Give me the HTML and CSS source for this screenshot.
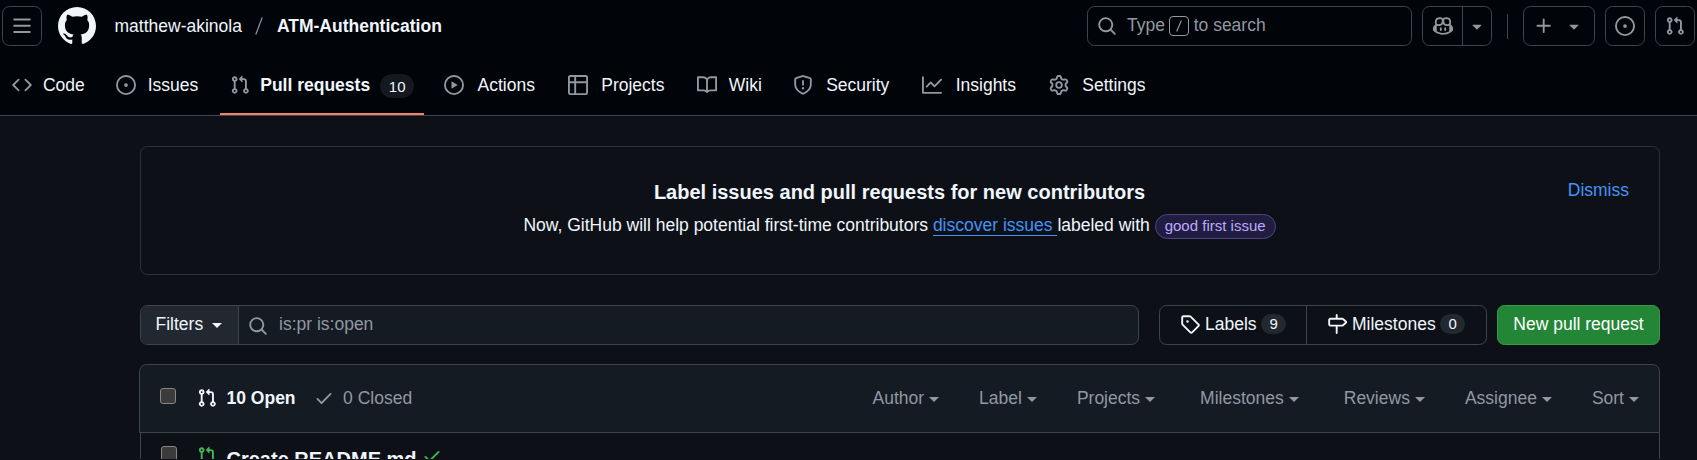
FILE: index.html
```html
<!DOCTYPE html>
<html lang="en">
<head>
<meta charset="utf-8">
<title>Pull requests · matthew-akinola/ATM-Authentication</title>
<link rel="stylesheet" href="styles.css">
</head>
<body>
<svg class="defs" aria-hidden="true">
  <symbol id="pr" viewBox="0 0 16 16"><path d="M1.5 3.25a2.25 2.25 0 1 1 3 2.122v5.256a2.251 2.251 0 1 1-1.5 0V5.372A2.25 2.25 0 0 1 1.5 3.25Zm5.677-.177L9.573.677A.25.25 0 0 1 10 .854V2.5h1A2.5 2.5 0 0 1 13.5 5v5.628a2.251 2.251 0 1 1-1.5 0V5a1 1 0 0 0-1-1h-1v1.646a.25.25 0 0 1-.427.177L7.177 3.427a.25.25 0 0 1 0-.354ZM3.75 2.5a.75.75 0 1 0 0 1.5.75.75 0 0 0 0-1.5Zm0 9.5a.75.75 0 1 0 0 1.5.75.75 0 0 0 0-1.5Zm8.25.75a.75.75 0 1 0 1.5 0 .75.75 0 0 0-1.5 0Z"/></symbol>
  <symbol id="issue" viewBox="0 0 16 16"><path d="M8 9.5a1.5 1.5 0 1 0 0-3 1.5 1.5 0 0 0 0 3Z"/><path d="M8 0a8 8 0 1 1 0 16A8 8 0 0 1 8 0ZM1.5 8a6.5 6.5 0 1 0 13 0 6.5 6.5 0 0 0-13 0Z"/></symbol>
  <symbol id="search" viewBox="0 0 16 16"><path d="M10.68 11.74a6 6 0 0 1-7.922-8.982 6 6 0 0 1 8.982 7.922l3.04 3.04a.749.749 0 0 1-.326 1.275.749.749 0 0 1-.734-.215ZM11.5 7a4.499 4.499 0 1 0-8.997 0A4.499 4.499 0 0 0 11.5 7Z"/></symbol>
  <symbol id="caret" viewBox="0 0 16 16"><path d="m4.427 7.427 3.396 3.396a.25.25 0 0 0 .354 0l3.396-3.396A.25.25 0 0 0 11.396 7H4.604a.25.25 0 0 0-.177.427Z"/></symbol>
  <symbol id="check" viewBox="0 0 16 16"><path d="M13.78 4.22a.75.75 0 0 1 0 1.06l-7.25 7.25a.75.75 0 0 1-1.06 0L2.22 9.28a.751.751 0 0 1 .018-1.042.751.751 0 0 1 1.042-.018L6 10.94l6.72-6.72a.75.75 0 0 1 1.06 0Z"/></symbol>
</svg>

<header class="top">
  <div class="bar">
    <button class="box menu"><svg class="icon" viewBox="0 0 16 16"><path d="M1 2.75A.75.75 0 0 1 1.75 2h12.5a.75.75 0 0 1 0 1.5H1.75A.75.75 0 0 1 1 2.75Zm0 5A.75.75 0 0 1 1.75 7h12.5a.75.75 0 0 1 0 1.5H1.75A.75.75 0 0 1 1 7.75ZM1.75 12h12.5a.75.75 0 0 1 0 1.5H1.75a.75.75 0 0 1 0-1.5Z"/></svg></button>
    <svg class="mark" viewBox="0 0 16 16"><path d="M8 0c4.42 0 8 3.58 8 8a8.013 8.013 0 0 1-5.45 7.59c-.4.08-.55-.17-.55-.38 0-.27.01-1.13.01-2.2 0-.75-.25-1.23-.54-1.48 1.78-.2 3.65-.88 3.65-3.95 0-.88-.31-1.59-.82-2.15.08-.2.36-1.02-.08-2.12 0 0-.67-.22-2.2.82-.64-.18-1.32-.27-2-.27-.68 0-1.36.09-2 .27-1.53-1.03-2.2-.82-2.2-.82-.44 1.1-.16 1.92-.08 2.12-.51.56-.82 1.28-.82 2.15 0 3.06 1.86 3.75 3.64 3.95-.23.2-.44.55-.51 1.07-.46.21-1.61.55-2.33-.66-.15-.24-.6-.83-1.23-.82-.67.01-.27.38.01.53.34.19.73.9.82 1.13.16.45.68 1.31 2.69.94 0 .67.01 1.3.01 1.49 0 .21-.15.45-.55.38A7.995 7.995 0 0 1 0 8c0-4.42 3.58-8 8-8Z"/></svg>
    <div class="crumbs"><a>matthew-akinola</a><svg class="slash" viewBox="0 0 8 18"><path d="M7.2.5.8 17.5"/></svg><a class="strong">ATM-Authentication</a></div>
    <div class="tools">
      <div class="box find"><svg class="icon"><use href="#search"/></svg><span class="find-text">Type <kbd><svg viewBox="0 0 20 20"><path d="M12.6 4 7.4 16"/></svg></kbd> to search</span></div>
      <div class="box copilot">
        <span class="half"><svg class="icon" viewBox="0 0 16 16"><path d="M7.998 15.035c-4.562 0-7.873-2.914-7.998-3.749V9.338c.085-.628.677-1.686 1.588-2.065.013-.07.024-.143.036-.218.029-.183.06-.384.126-.612-.201-.508-.254-1.084-.254-1.656 0-.87.128-1.769.693-2.484.579-.733 1.494-1.124 2.724-1.261 1.206-.134 2.262.034 2.944.765.05.053.096.108.139.165.044-.057.094-.112.143-.165.682-.731 1.738-.899 2.944-.765 1.23.137 2.145.528 2.724 1.261.566.715.693 1.614.693 2.484 0 .572-.053 1.148-.254 1.656.066.228.098.429.126.612.012.076.024.148.037.218.924.385 1.522 1.471 1.591 2.095v1.872c0 .766-3.351 3.795-8.002 3.795Zm0-1.485c2.28 0 4.584-1.11 5.002-1.433V7.862l-.023-.116c-.49.21-1.075.291-1.727.291-1.146 0-2.059-.327-2.71-.991A3.222 3.222 0 0 1 8 6.303a3.24 3.24 0 0 1-.544.743c-.65.664-1.563.991-2.71.991-.652 0-1.236-.081-1.727-.291l-.023.116v4.255c.419.323 2.722 1.433 5.002 1.433ZM6.762 2.83c-.193-.206-.637-.413-1.682-.297-1.019.113-1.479.404-1.713.7-.247.312-.369.789-.369 1.554 0 .793.129 1.171.308 1.371.162.181.519.379 1.442.379.853 0 1.339-.235 1.638-.54.315-.322.527-.827.617-1.553.117-.935-.037-1.395-.241-1.614Zm4.155-.297c-1.044-.116-1.488.091-1.681.297-.204.219-.359.679-.242 1.614.091.726.303 1.231.618 1.553.299.305.784.54 1.638.54.922 0 1.28-.198 1.442-.379.179-.2.308-.578.308-1.371 0-.765-.123-1.242-.37-1.554-.233-.296-.693-.587-1.713-.7Z"/><path d="M6.25 9.037a.75.75 0 0 1 .75.75v1.501a.75.75 0 0 1-1.5 0V9.787a.75.75 0 0 1 .75-.75Zm4.25.75v1.501a.75.75 0 0 1-1.5 0V9.787a.75.75 0 0 1 1.5 0Z"/></svg></span>
        <span class="half drop"><svg class="icon"><use href="#caret"/></svg></span>
      </div>
      <span class="sep"></span>
      <div class="box plus"><svg class="icon" viewBox="0 0 16 16"><path d="M7.75 2a.75.75 0 0 1 .75.75V7h4.25a.75.75 0 0 1 0 1.5H8.5v4.25a.75.75 0 0 1-1.5 0V8.5H2.75a.75.75 0 0 1 0-1.5H7V2.75A.75.75 0 0 1 7.75 2Z"/></svg><svg class="icon"><use href="#caret"/></svg></div>
      <button class="box tool"><svg class="icon"><use href="#issue"/></svg></button>
      <button class="box tool"><svg class="icon"><use href="#pr"/></svg></button>
    </div>
  </div>
  <nav class="tabs">
    <a class="tab"><svg class="icon" viewBox="0 0 16 16"><path d="m11.28 3.22 4.25 4.25a.75.75 0 0 1 0 1.06l-4.25 4.25a.749.749 0 0 1-1.275-.326.749.749 0 0 1 .215-.734L13.94 8l-3.72-3.72a.749.749 0 0 1 .326-1.275.749.749 0 0 1 .734.215Zm-6.56 0a.751.751 0 0 1 1.042.018.751.751 0 0 1 .018 1.042L2.06 8l3.72 3.72a.749.749 0 0 1-.326 1.275.749.749 0 0 1-.734-.215L.47 8.53a.75.75 0 0 1 0-1.06Z"/></svg><span class="name" data-content="Code">Code</span></a>
    <a class="tab"><svg class="icon"><use href="#issue"/></svg><span class="name" data-content="Issues">Issues</span></a>
    <a class="tab current"><svg class="icon"><use href="#pr"/></svg><span class="name" data-content="Pull requests">Pull requests</span><span class="count">10</span></a>
    <a class="tab"><svg class="icon" viewBox="0 0 16 16"><path d="M8 0a8 8 0 1 1 0 16A8 8 0 0 1 8 0ZM1.5 8a6.5 6.5 0 1 0 13 0 6.5 6.5 0 0 0-13 0Zm4.879-2.773 4.264 2.559a.25.25 0 0 1 0 .428l-4.264 2.559A.25.25 0 0 1 6 10.559V5.442a.25.25 0 0 1 .379-.215Z"/></svg><span class="name" data-content="Actions">Actions</span></a>
    <a class="tab"><svg class="icon" viewBox="0 0 16 16"><path d="M0 1.75C0 .784.784 0 1.75 0h12.5C15.216 0 16 .784 16 1.75v12.5A1.75 1.75 0 0 1 14.25 16H1.75A1.75 1.75 0 0 1 0 14.25ZM6.5 6.5v8h7.75a.25.25 0 0 0 .25-.25V6.5Zm8-1.5V1.75a.25.25 0 0 0-.25-.25H6.5V5Zm-13 1.5v7.75c0 .138.112.25.25.25H5v-8ZM5 5V1.5H1.75a.25.25 0 0 0-.25.25V5Z"/></svg><span class="name" data-content="Projects">Projects</span></a>
    <a class="tab"><svg class="icon" viewBox="0 0 16 16"><path d="M0 1.75A.75.75 0 0 1 .75 1h4.253c1.227 0 2.317.59 3 1.501A3.743 3.743 0 0 1 11.006 1h4.245a.75.75 0 0 1 .75.75v10.5a.75.75 0 0 1-.75.75h-4.507a2.25 2.25 0 0 0-1.591.659l-.622.621a.75.75 0 0 1-1.06 0l-.622-.621A2.25 2.25 0 0 0 5.258 13H.75a.75.75 0 0 1-.75-.75Zm7.251 10.324.004-5.073-.002-2.253A2.25 2.25 0 0 0 5.003 2.5H1.5v9h3.757a3.75 3.75 0 0 1 1.994.574ZM8.755 4.75l-.004 7.322a3.752 3.752 0 0 1 1.992-.572H14.5v-9h-3.495a2.25 2.25 0 0 0-2.25 2.25Z"/></svg><span class="name" data-content="Wiki">Wiki</span></a>
    <a class="tab"><svg class="icon" viewBox="0 0 16 16"><path d="M7.467.133a1.748 1.748 0 0 1 1.066 0l5.25 1.68A1.75 1.75 0 0 1 15 3.48V7c0 1.566-.32 3.182-1.303 4.682-.983 1.498-2.585 2.813-5.032 3.855a1.697 1.697 0 0 1-1.33 0c-2.447-1.042-4.049-2.357-5.032-3.855C1.32 10.182 1 8.566 1 7V3.48a1.75 1.75 0 0 1 1.217-1.667Zm.61 1.429a.25.25 0 0 0-.153 0l-5.25 1.68a.25.25 0 0 0-.174.238V7c0 1.358.275 2.666 1.057 3.86.784 1.194 2.121 2.34 4.366 3.297a.196.196 0 0 0 .154 0c2.245-.956 3.582-2.104 4.366-3.298C13.225 9.666 13.5 8.36 13.5 7V3.48a.251.251 0 0 0-.174-.237l-5.25-1.68ZM8.75 4.75v3a.75.75 0 0 1-1.5 0v-3a.75.75 0 0 1 1.5 0ZM9 10.5a1 1 0 1 1-2 0 1 1 0 0 1 2 0Z"/></svg><span class="name" data-content="Security">Security</span></a>
    <a class="tab"><svg class="icon" viewBox="0 0 16 16"><path d="M1.5 1.75V13.5h13.75a.75.75 0 0 1 0 1.5H.75a.75.75 0 0 1-.75-.75V1.75a.75.75 0 0 1 1.5 0Zm14.28 2.53-5.25 5.25a.75.75 0 0 1-1.06 0L7 7.06 4.28 9.78a.751.751 0 0 1-1.042-.018.751.751 0 0 1-.018-1.042l3.25-3.25a.75.75 0 0 1 1.06 0L10 7.94l4.72-4.72a.751.751 0 0 1 1.042.018.751.751 0 0 1 .018 1.042Z"/></svg><span class="name" data-content="Insights">Insights</span></a>
    <a class="tab"><svg class="icon" viewBox="0 0 16 16"><path d="M8 0a8.2 8.2 0 0 1 .701.031C9.444.095 9.99.645 10.16 1.29l.288 1.107c.018.066.079.158.212.224.231.114.454.243.668.386.123.082.233.09.299.071l1.103-.303c.644-.176 1.392.021 1.82.63.27.385.506.792.704 1.218.315.675.111 1.422-.364 1.891l-.814.806c-.049.048-.098.147-.088.294.016.257.016.515 0 .772-.01.147.038.246.088.294l.814.806c.475.469.679 1.216.364 1.891a7.977 7.977 0 0 1-.704 1.217c-.428.61-1.176.807-1.82.63l-1.102-.302c-.067-.019-.177-.011-.3.071a5.909 5.909 0 0 1-.668.386c-.133.066-.194.158-.211.224l-.29 1.106c-.168.646-.715 1.196-1.458 1.26a8.006 8.006 0 0 1-1.402 0c-.743-.064-1.289-.614-1.458-1.26l-.289-1.106c-.018-.066-.079-.158-.212-.224a5.738 5.738 0 0 1-.668-.386c-.123-.082-.233-.09-.299-.071l-1.103.303c-.644.176-1.392-.021-1.82-.63a8.12 8.12 0 0 1-.704-1.218c-.315-.675-.111-1.422.363-1.891l.815-.806c.05-.048.098-.147.088-.294a6.214 6.214 0 0 1 0-.772c.01-.147-.038-.246-.088-.294l-.815-.806C.635 6.045.431 5.298.746 4.623a7.92 7.92 0 0 1 .704-1.217c.428-.61 1.176-.807 1.82-.63l1.102.302c.067.019.177.011.3-.071.214-.143.437-.272.668-.386.133-.066.194-.158.211-.224l.29-1.106C6.009.645 6.556.095 7.299.03 7.53.01 7.764 0 8 0Zm-.571 1.525c-.036.003-.108.036-.137.146l-.289 1.105c-.147.561-.549.967-.998 1.189-.173.086-.34.183-.5.29-.417.278-.97.423-1.529.27l-1.103-.303c-.109-.03-.175.016-.195.045-.22.312-.412.644-.573.99-.014.031-.021.11.059.19l.815.806c.411.406.562.957.53 1.456a4.709 4.709 0 0 0 0 .582c.032.499-.119 1.05-.53 1.456l-.815.806c-.081.08-.073.159-.059.19.162.346.353.677.573.989.02.03.085.076.195.046l1.102-.303c.56-.153 1.113-.008 1.53.27.161.107.328.204.501.29.447.222.85.629.997 1.189l.289 1.105c.029.109.101.143.137.146a6.6 6.6 0 0 0 1.142 0c.036-.003.108-.036.137-.146l.289-1.105c.147-.561.549-.967.998-1.189.173-.086.34-.183.5-.29.417-.278.97-.423 1.529-.27l1.103.303c.109.029.175-.016.195-.045.22-.313.411-.644.573-.99.014-.031.021-.11-.059-.19l-.815-.806c-.411-.406-.562-.957-.53-1.456a4.709 4.709 0 0 0 0-.582c-.032-.499.119-1.05.53-1.456l.815-.806c.081-.08.073-.159.059-.19a6.464 6.464 0 0 0-.573-.989c-.02-.03-.085-.076-.195-.046l-1.102.303c-.56.153-1.113.008-1.53-.27a4.44 4.44 0 0 0-.501-.29c-.447-.222-.85-.629-.997-1.189l-.289-1.105c-.029-.11-.101-.143-.137-.146a6.6 6.6 0 0 0-1.142 0ZM11 8a3 3 0 1 1-6 0 3 3 0 0 1 6 0ZM9.5 8a1.5 1.5 0 1 0-3.001.001A1.5 1.5 0 0 0 9.5 8Z"/></svg><span class="name" data-content="Settings">Settings</span></a>
  </nav>
</header>

<main class="page">
  <section class="notice">
    <a class="dismiss">Dismiss</a>
    <h3>Label issues and pull requests for new contributors</h3>
    <p>Now, GitHub will help potential first-time contributors <a class="link">discover issues </a>labeled with <span class="pill">good first issue</span></p>
  </section>

  <div class="controls">
    <div class="query">
      <button class="filters">Filters<i class="tri"></i></button>
      <span class="field"><svg class="icon"><use href="#search"/></svg>is:pr is:open</span>
    </div>
    <div class="group">
      <a class="labels"><svg class="icon" viewBox="0 0 16 16"><path d="M1 7.775V2.75C1 1.784 1.784 1 2.75 1h5.025c.464 0 .91.184 1.238.513l6.25 6.25a1.75 1.75 0 0 1 0 2.474l-5.026 5.026a1.75 1.75 0 0 1-2.474 0l-6.25-6.25A1.752 1.752 0 0 1 1 7.775Zm1.5 0c0 .066.026.13.073.177l6.25 6.25a.25.25 0 0 0 .354 0l5.025-5.025a.25.25 0 0 0 0-.354l-6.25-6.25a.25.25 0 0 0-.177-.073H2.75a.25.25 0 0 0-.25.25ZM6 5a1 1 0 1 1 0 2 1 1 0 0 1 0-2Z"/></svg>Labels<span class="num">9</span></a>
      <a class="miles"><svg class="icon" viewBox="0 0 16 16"><path d="M7.75 0a.75.75 0 0 1 .75.75V3h3.634c.414 0 .814.147 1.13.414l2.07 1.75a1.75 1.75 0 0 1 0 2.672l-2.07 1.75a1.75 1.75 0 0 1-1.13.414H8.5v5.25a.75.75 0 0 1-1.5 0V10H2.75A1.75 1.75 0 0 1 1 8.25v-3.5C1 3.784 1.784 3 2.75 3H7V.75A.75.75 0 0 1 7.75 0Zm4.384 8.5a.25.25 0 0 0 .161-.06l2.07-1.75a.248.248 0 0 0 0-.38l-2.07-1.75a.25.25 0 0 0-.161-.06H2.75a.25.25 0 0 0-.25.25v3.5c0 .138.112.25.25.25h9.384Z"/></svg>Milestones<span class="num">0</span></a>
    </div>
    <a class="create">New pull request</a>
  </div>

  <section class="list">
    <div class="head">
      <span class="cb"></span>
      <svg class="icon open"><use href="#pr"/></svg><b class="n-open">10 Open</b>
      <svg class="icon done"><use href="#check"/></svg><span>0 Closed</span>
      <div class="sorts">
        <span>Author<i class="tri"></i></span><span>Label<i class="tri"></i></span><span>Projects<i class="tri"></i></span><span class="wide">Milestones<i class="tri"></i></span><span class="wide">Reviews<i class="tri"></i></span><span>Assignee<i class="tri"></i></span><span>Sort<i class="tri"></i></span>
      </div>
    </div>
    <div class="row">
      <span class="cb"></span>
      <svg class="icon green"><use href="#pr"/></svg><a class="title">Create README.md</a>
      <svg class="icon ok"><use href="#check"/></svg>
    </div>
  </section>
</main>
</body>
</html>
```
FILE: styles.css
```css
* { box-sizing: border-box; }
html { overflow: hidden; }
body {
  margin: 0;
  height: 460px;
  overflow: hidden;
  background: #0d1117;
  color: #f0f6fc;
  font: 17.5px/26px "Liberation Sans", Arial, sans-serif;
}
button { font: inherit; color: inherit; background: none; padding: 0; margin: 0; }
.defs { display: none; }
.icon { width: 20px; height: 20px; fill: currentColor; flex: none; display: block; }

/* Global header */
.top { height: 116px; background: #010409; border-bottom: 1px solid #3d444d; color: #9198a1; }
.bar { display: flex; align-items: center; height: 52px; padding: 0 2px; }
.box { height: 40px; border: 1px solid #3d444d; border-radius: 7.5px; display: flex; align-items: center; flex: none; }
.menu { width: 40px; justify-content: center; }
.mark { width: 38px; height: 38px; margin: 0 18.5px 0 16px; fill: #f0f6fc; }
.crumbs { display: flex; align-items: center; color: #f0f6fc; }
.slash { width: 8px; height: 18px; margin: 0 14px 0 13px; fill: none; stroke: #9198a1; stroke-width: 1.2; }
.strong { font-weight: 700; }
.tools { display: flex; align-items: center; margin-left: auto; }
.find { width: 325px; padding: 0 10px 0 9px; gap: 10px; margin-right: 10px; }
.find-text { display: flex; align-items: center; white-space: pre; line-height: 24px; padding-bottom: 2px; }
kbd { display: flex; width: 20px; height: 20px; margin: 2px 0 0 -1px; border: 1px solid #9198a1; border-radius: 4px; }
kbd svg { width: 18px; height: 18px; fill: none; stroke: #9198a1; stroke-width: 1.3; }
.copilot { width: 70px; }
.half { width: 39px; height: 38px; display: flex; align-items: center; justify-content: center; }
.drop { width: 29px; border-left: 1px solid #3d444d; }
.sep { width: 1px; height: 25px; margin: 0 15px; background: #3d444d; }
.plus { width: 72px; padding: 0 10px; justify-content: space-between; }
.tool { width: 40px; justify-content: center; margin-left: 10px; }

.tabs { display: flex; gap: 10px; height: 63px; padding-left: 2px; }
.tab { display: flex; align-items: center; height: 63px; padding: 5px 10px 0; gap: 10px; border-bottom: 2.5px solid transparent; color: #9198a1; }
.name { color: #f0f6fc; text-align: center; }
.name::before { content: attr(data-content); display: block; height: 0; visibility: hidden; font-weight: 700; }
.current { border-bottom-color: #f78166; }
.current .name { font-weight: 700; }
.count { width: 34px; height: 24px; text-align: center; border-radius: 24px; background: #15191f; color: #f0f6fc; font-size: 15px; line-height: 25px; margin-top: 1px; }

/* Content */
.page { padding: 30px 37px 0 140px; }
.notice { position: relative; height: 129px; border: 1px solid #2b323a; border-radius: 7.5px; text-align: center; padding: 30px 1px 0 0; }
.notice h3 { margin: 0; font-size: 20px; line-height: 30px; }
.notice p { margin: 5px 0 0; line-height: 26px; }
.dismiss { position: absolute; right: 30px; top: 30px; color: #4493f8; }
.link { color: #4493f8; border-bottom: 1px solid #4493f8; white-space: pre; display: inline-block; line-height: 20px; }
.pill { display: inline-block; height: 25px; padding: 0 9px; border: 1px solid #4d4585; border-radius: 25px; background: #211d40; color: #beaaff; font-size: 15px; line-height: 22px; }

.controls { display: flex; margin-top: 30px; height: 40px; }
.query { display: flex; width: 999px; border: 1px solid #3d444d; border-radius: 7.5px; background: #151b23; overflow: hidden; }
.filters { display: flex; align-items: center; width: 98px; padding: 0 0 3px 14.5px; border: 0; border-right: 1px solid #3d444d; background: #212830; }
.tri { display: inline-block; border: 5px solid transparent; border-top-color: currentColor; border-bottom: 0; margin-left: 5px; vertical-align: middle; }
.filters .tri { margin: 4px 0 0 9px; }
.field { display: flex; align-items: center; padding: 0 0 3px 9px; gap: 11px; color: #9198a1; }
.field .icon { margin-top: 4px; }
.group { display: flex; width: 328px; margin: 0 10px 0 20px; border: 1px solid #3d444d; border-radius: 7.5px; }
.group a { display: flex; align-items: center; padding-bottom: 2px; }
.labels { width: 147px; padding-left: 20px; border-right: 1px solid #3d444d; }
.miles { padding-left: 20px; }
.group .icon { margin-right: 5px; }
.num { min-width: 25px; height: 20px; margin-left: 4.5px; padding: 0 8px; border-radius: 20px; background: #212830; font-size: 15px; line-height: 20px; text-align: center; }
.create { width: 163px; border: 1px solid #3c9949; border-radius: 7.5px; background: #238636; color: #fff; line-height: 36px; text-align: center; }

.list { margin: 19px 0 0 -1px; }
.head { display: flex; align-items: center; height: 69px; padding: 0 20px 1px; border: 1px solid #3d444d; border-radius: 7.5px 7.5px 0 0; background: #151b23; color: #9198a1; }
.cb { width: 16px; height: 16px; border: 1px solid #858585; border-radius: 3px; background: #3b3b3b; margin: 0 21px 5px 0; }
.open { color: #f0f6fc; margin-right: 9.5px; }
.n-open { color: #f0f6fc; }
.done { margin: 0 9.5px 0 18px; }
.sorts { display: flex; gap: 40px; margin-left: auto; }
.wide { margin-left: 5px; }
.row { display: flex; height: 26px; overflow: hidden; margin-left: 1px; padding: 13px 20px 0; border: 1px solid #3d444d; border-width: 0 1px; }
.row .cb { margin-right: 20px; flex: none; }
.green, .ok { color: #3fb950; }
.title { margin-left: 9.5px; font-size: 20px; font-weight: 700; }
.ok { margin-left: 5px; }
```
